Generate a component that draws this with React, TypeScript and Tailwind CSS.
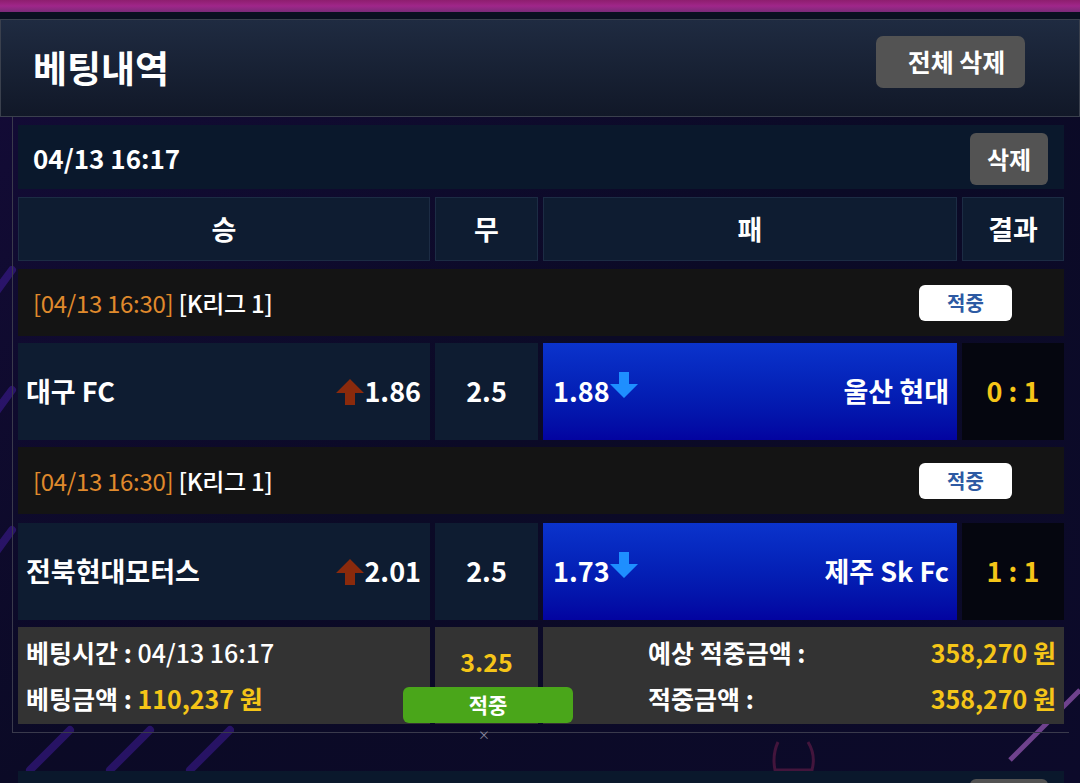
import React from 'react'

const FONT = { fontFamily: '"Noto Sans CJK KR", "Noto Sans", sans-serif' }

function UpArrow() {
  return (
    <svg width="28" height="26" viewBox="0 0 28 26" className="shrink-0">
      <polygon points="0,14 14,0 28,14 19,14 19,26 9,26 9,14" fill="#8b2a0c" />
    </svg>
  )
}

function DownArrow() {
  return (
    <svg width="28" height="26" viewBox="0 0 28 26" className="shrink-0">
      <polygon points="9,0 19,0 19,12 28,12 14,26 0,12 9,12" fill="#1e8fff" />
    </svg>
  )
}

interface Match {
  home: string
  homeOdd: string
  draw: string
  away: string
  awayOdd: string
  score: string
}

const matches: Match[] = [
  { home: '대구 FC', homeOdd: '1.86', draw: '2.5', away: '울산 현대', awayOdd: '1.88', score: '0 : 1' },
  { home: '전북현대모터스', homeOdd: '2.01', draw: '2.5', away: '제주 Sk Fc', awayOdd: '1.73', score: '1 : 1' },
]

function LeagueRow() {
  return (
    <div className="flex h-[67px] items-center justify-between bg-[#141414] pl-[15px] pr-[52px]">
      <div className="text-[24px] tracking-[-0.3px]">
        <span className="text-[#e08a2c]">[04/13 16:30]</span>{' '}
        <span className="font-medium text-white">[K리그 1]</span>
      </div>
      <div className="flex h-[36px] w-[93px] items-center justify-center rounded-[6px] bg-white text-[20px] font-bold text-[#2d5aa3]">
        적중
      </div>
    </div>
  )
}

function MatchRow({ m }: { m: Match }) {
  return (
    <div className="grid h-[97px] grid-cols-[412px_103px_414px_102px] gap-x-[5px]">
      <div className="flex items-center justify-between bg-[#0e1c31] pl-[8px] pr-[9px]">
        <span className="text-[27px] font-bold text-white">{m.home}</span>
        <span className="flex items-center">
          <UpArrow />
          <span className="text-[27px] font-bold text-white">{m.homeOdd}</span>
        </span>
      </div>
      <div className="flex items-center justify-center bg-[#0e1c31] text-[27px] font-bold text-white">{m.draw}</div>
      <div className="flex items-center justify-between bg-gradient-to-b from-[#0b33cc] to-[#0303a0] pl-[10px] pr-[8px]">
        <span className="flex items-center">
          <span className="text-[27px] font-bold text-white">{m.awayOdd}</span>
          <span className="-mt-[14px]">
            <DownArrow />
          </span>
        </span>
        <span className="text-[27px] font-bold text-white">{m.away}</span>
      </div>
      <div className="flex items-center justify-center bg-[#05060f] text-[27px] font-bold text-[#f5c518]">{m.score}</div>
    </div>
  )
}

export default function App() {
  return (
    <div
      style={FONT}
      className="relative h-[783px] w-[1080px] overflow-hidden bg-gradient-to-br from-[#140b38] via-[#0b0a26] to-[#0c0a2a]"
    >
      {/* decorative background strokes */}
      <svg className="absolute inset-0" width="1080" height="783">
        <g stroke="#4a1fb0" strokeWidth="8" opacity="0.45" strokeLinecap="round">
          <line x1="-10" y1="300" x2="12" y2="270" />
          <line x1="-10" y1="420" x2="12" y2="390" />
          <line x1="-10" y1="560" x2="12" y2="530" />
          <line x1="30" y1="770" x2="70" y2="730" />
          <line x1="110" y1="770" x2="150" y2="730" />
          <line x1="190" y1="770" x2="230" y2="730" />
        </g>
        <line x1="1010" y1="760" x2="1080" y2="690" stroke="#9a5ab8" strokeWidth="5" opacity="0.7" />
        <path d="M778 742 Q772 755 775 770 L812 770 Q816 755 808 742" fill="none" stroke="#7a2050" strokeWidth="3" opacity="0.5" />
      </svg>

      <div className="relative">
        <div className="h-[12px] bg-gradient-to-b from-[#8e1e6e] via-[#a0268a] to-[#7a2a78]" />
        <div className="h-[7px] bg-[#0a1020]" />

        {/* header */}
        <div className="flex h-[98px] items-center justify-between border border-[#3a404d] bg-gradient-to-b from-[#1f2b41] to-[#111828] pl-[32px] pr-[54px]">
          <h1 className="text-[37px] font-bold text-white">베팅내역</h1>
          <button className="-mt-[12px] flex h-[52px] w-[149px] items-center justify-center rounded-[7px] bg-[#535353] pl-[12px] text-[25px] font-bold text-white">
            전체 삭제
          </button>
        </div>

        {/* list */}
        <div className="ml-[12px] w-[1057px] border-b border-l border-[#3a3a4c] pb-[8px] pl-[5px] pt-[8px]">
          <div className="relative w-[1046px]">
            <div className="flex h-[64px] items-center justify-between bg-[#0a182c] pl-[15px] pr-[16px]">
              <span className="text-[26px] font-bold text-white">04/13 16:17</span>
              <button className="mt-[4px] flex h-[52px] w-[78px] items-center justify-center rounded-[6px] bg-[#535353] text-[24px] font-bold text-white">
                삭제
              </button>
            </div>

            <div className="mt-[8px] grid h-[64px] grid-cols-[412px_103px_414px_102px] gap-x-[5px] text-[27px] font-bold text-white">
              <div className="flex items-center justify-center border border-[#1c2c44] bg-[#0e1c31]">승</div>
              <div className="flex items-center justify-center border border-[#1c2c44] bg-[#0e1c31]">무</div>
              <div className="flex items-center justify-center border border-[#1c2c44] bg-[#0e1c31]">패</div>
              <div className="flex items-center justify-center border border-[#1c2c44] bg-[#0e1c31]">결과</div>
            </div>

            <div className="mt-[8px]">
              <LeagueRow />
            </div>
            <div className="mt-[7px]">
              <MatchRow m={matches[0]} />
            </div>
            <div className="mt-[7px]">
              <LeagueRow />
            </div>
            <div className="mt-[9px]">
              <MatchRow m={matches[1]} />
            </div>

            {/* summary */}
            <div className="relative mt-[7px] grid h-[97px] grid-cols-[412px_103px_521px] gap-x-[5px] text-[25px] font-bold">
              <div className="flex flex-col justify-center gap-[9px] bg-[#333333] pl-[8px]">
                <div className="text-white">베팅시간 : <span className="font-medium">04/13 16:17</span></div>
                <div className="text-white">
                  베팅금액 : <span className="text-[#f5c518]">110,237 원</span>
                </div>
              </div>
              <div className="flex justify-center bg-[#333333] pt-[16px] text-[25px] text-[#f5c518]">3.25</div>
              <div className="flex flex-col justify-center gap-[9px] bg-[#333333] pl-[105px] pr-[8px]">
                <div className="flex justify-between">
                  <span className="text-white">예상 적중금액 :</span>
                  <span className="text-[#f5c518]">358,270 원</span>
                </div>
                <div className="flex justify-between">
                  <span className="text-white">적중금액 :</span>
                  <span className="text-[#f5c518]">358,270 원</span>
                </div>
              </div>
              <div className="absolute left-[385px] top-[60px] flex h-[36px] w-[170px] items-center justify-center rounded-[6px] bg-[#4aa61a] text-[21px] font-bold text-white">
                적중
              </div>
            </div>
          </div>
        </div>
        <div className="absolute left-[478px] top-[729px] text-[12px] leading-none text-[#8a8aa0]">×</div>

        {/* next card, partially visible */}
        <div className="ml-[18px] mt-[38px] flex h-[64px] w-[1046px] items-start justify-end bg-[#0a182c] pr-[16px] pt-[8px]">
          <div className="h-[52px] w-[78px] rounded-[6px] bg-[#535353]" />
        </div>
      </div>
    </div>
  )
}
